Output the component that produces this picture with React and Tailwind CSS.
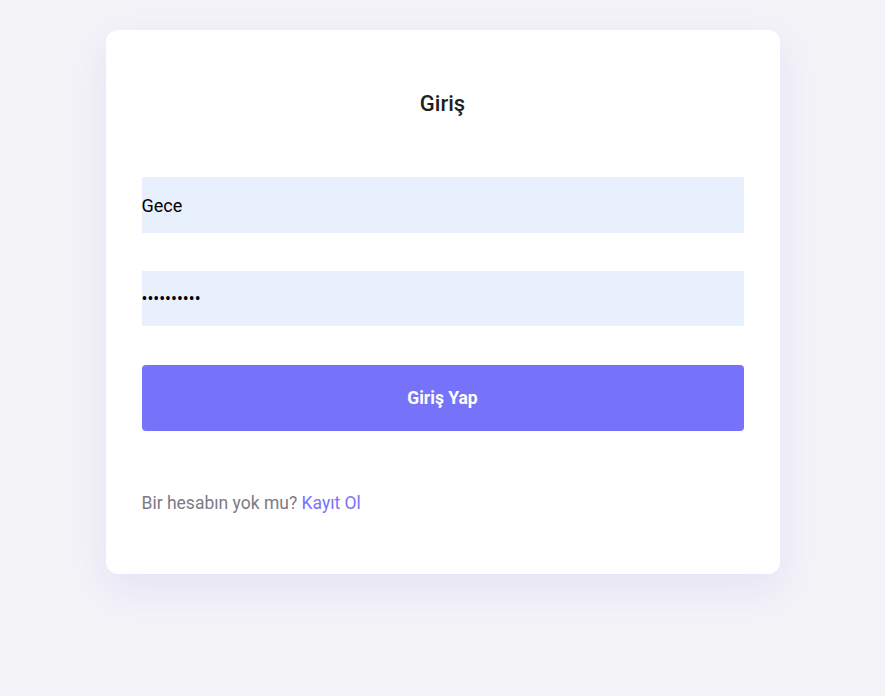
export default function App() {
  return (
    <div
      className="min-h-screen w-full bg-[#f3f3f8] pt-[30px]"
      style={{ fontFamily: 'Roboto, "Noto Sans", sans-serif' }}
    >
      <div className="mx-auto w-[674px] rounded-[12px] bg-white px-[36px] pt-[58px] pb-[57px] shadow-[0_14px_40px_rgba(120,110,230,0.12)]">
        <h2 className="text-center text-[22px] leading-[31px] font-medium text-[#1f1f1f]">Giriş</h2>

        <form className="mt-[58px] flex flex-col" onSubmit={e => e.preventDefault()}>
          <input
            type="text"
            defaultValue="Gece"
            className="h-[56px] w-full bg-[#e8f0fe] text-[18px] text-black outline-none"
          />
          <input
            type="password"
            defaultValue="0123456789"
            className="mt-[38px] h-[55px] w-full bg-[#e8f0fe] text-[17.5px] text-black outline-none"
          />
          <button
            type="submit"
            className="mt-[39px] h-[66px] w-full rounded-[4px] bg-[#7772fa] text-[17.5px] font-bold text-white"
          >
            Giriş Yap
          </button>
        </form>

        <p className="mt-[59px] text-[17.5px] leading-[27px] text-[#7b7b86]">
          Bir hesabın yok mu? <a href="#" className="text-[#7a72f9]">Kayıt Ol</a>
        </p>
      </div>
    </div>
  )
}
